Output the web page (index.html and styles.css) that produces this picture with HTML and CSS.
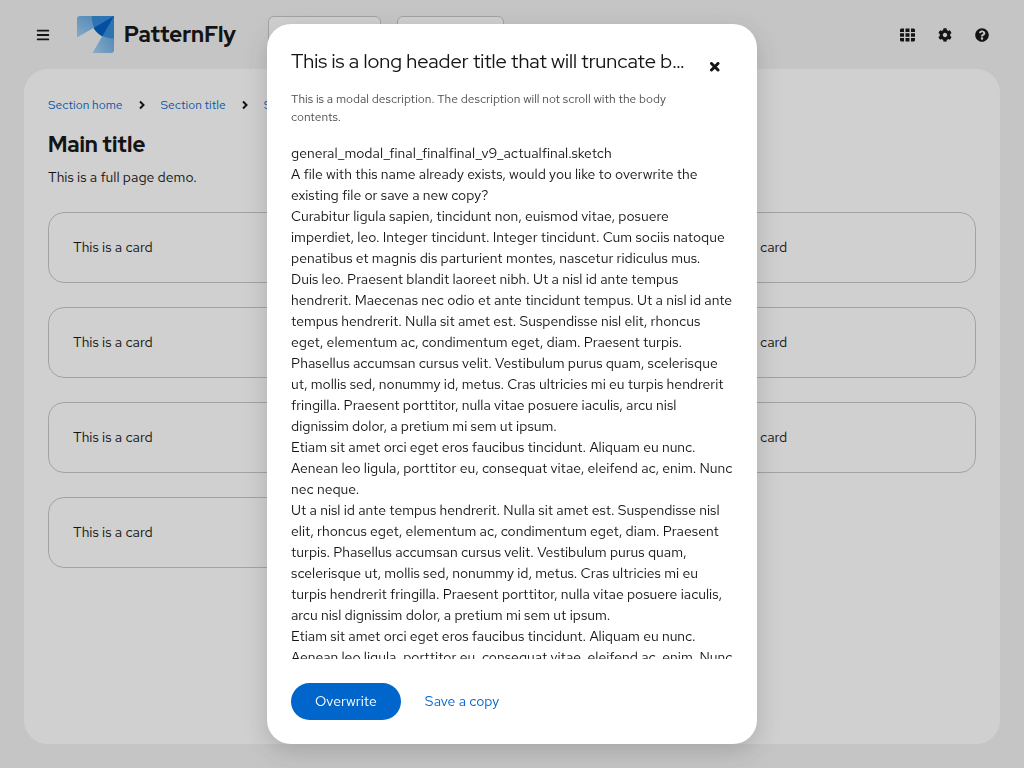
FILE: index.html
```html
<!DOCTYPE html>
<html lang="en">
<head>
<meta charset="utf-8">
<meta name="viewport" content="width=device-width, initial-scale=1">
<title>PatternFly modal</title>
<link rel="stylesheet" href="styles.css">
</head>
<body>
<div class="page">
  <header class="masthead">
    <button class="icon-button" type="button" aria-label="Global navigation">
      <svg width="14" height="14" viewBox="0 0 448 512"><path d="M16 132h416c8.800 0 16-7.200 16-16V76c0-8.800-7.200-16-16-16H16C7.200 60 0 67.200 0 76v40c0 8.800 7.200 16 16 16zm0 160h416c8.800 0 16-7.200 16-16v-40c0-8.800-7.200-16-16-16H16c-8.800 0-16 7.200-16 16v40c0 8.800 7.200 16 16 16zm0 160h416c8.800 0 16-7.200 16-16v-40c0-8.800-7.200-16-16-16H16c-8.800 0-16 7.200-16 16v40c0 8.800 7.200 16 16 16z"/></svg>
    </button>
    <a class="brand" href="#">
      <svg width="37" height="37" viewBox="0 0 37 37" aria-hidden="true">
        <defs>
          <linearGradient id="fade-left" x1="0" y1="1" x2="1" y2="0"><stop offset="0" stop-color="#a3d1f5"/><stop offset="1" stop-color="#4b97d8"/></linearGradient>
          <linearGradient id="fade-bottom" x1="0" y1="1" x2="1" y2="0"><stop offset="0" stop-color="#a8d2f5"/><stop offset="1" stop-color="#4b97d8"/></linearGradient>
        </defs>
        <path fill="url(#fade-left)" d="M3 0H37L0 21.500V3a3 3 0 0 1 3-3z"/>
        <path fill="url(#fade-bottom)" d="M37 0V34a3 3 0 0 1-3 3H15.500z"/>
        <path fill="#358ddb" d="M15 0H37V22.500C32.500 22.500 29 21.500 25.500 20L17 11.500C15.500 8 14.500 4 15 0z"/>
        <path fill="#005fc4" d="M37 0L16.500 12C18.500 15.500 21.500 18.500 25.300 20.500z"/>
      </svg>
      <span>PatternFly</span>
    </a>
    <div class="toolbar">
      <button class="menu-toggle" type="button" aria-label="Context selector"></button>
      <button class="menu-toggle" type="button" aria-label="Perspective"></button>
    </div>
    <div class="actions">
      <button class="icon-button" type="button" aria-label="Applications">
        <svg width="15" height="14" viewBox="0 0 15 14"><path d="M1 .500h3v3.500H0V1.500zM5.500.500h4V4h-4zM11 .500h3l1 1V4h-4zM0 5.200h4v3.600H0zM5.500 5.200h4v3.600h-4zM11 5.200h4v3.600h-4zM0 10h4v3.500H1l-1-1zM5.500 10h4v3.500h-4zM11 10h4v2.500l-1 1h-3z"/></svg>
      </button>
      <button class="icon-button" type="button" aria-label="Settings">
        <svg width="14" height="14" viewBox="0 0 512 512"><path d="M487.400 315.700l-42.600-24.600c4.300-23.200 4.300-47 0-70.200l42.600-24.600c4.900-2.800 7.100-8.600 5.500-14-11.100-35.600-30-67.800-54.700-94.600-3.800-4.100-10-5.100-14.800-2.300L380.800 110c-17.900-15.400-38.500-27.300-60.800-35.100V25.800c0-5.600-3.900-10.500-9.400-11.700-36.700-8.200-74.300-7.800-109.200 0-5.500 1.200-9.400 6.100-9.400 11.700V75c-22.200 7.900-42.800 19.800-60.800 35.100L88.700 85.500c-4.900-2.800-11-1.900-14.800 2.300-24.700 26.700-43.600 58.900-54.700 94.600-1.700 5.400.600 11.200 5.500 14L67.300 221c-4.300 23.200-4.300 47 0 70.200l-42.600 24.600c-4.900 2.800-7.100 8.600-5.500 14 11.100 35.600 30 67.800 54.700 94.600 3.800 4.100 10 5.100 14.800 2.300l42.600-24.600c17.900 15.400 38.500 27.300 60.800 35.100v49.200c0 5.600 3.900 10.500 9.400 11.700 36.700 8.200 74.300 7.800 109.200 0 5.500-1.200 9.400-6.100 9.400-11.700v-49.200c22.200-7.900 42.800-19.800 60.800-35.100l42.600 24.600c4.900 2.800 11 1.900 14.800-2.300 24.700-26.700 43.600-58.900 54.700-94.600 1.500-5.500-.700-11.300-5.600-14.100zM256 336c-44.100 0-80-35.900-80-80s35.900-80 80-80 80 35.900 80 80-35.900 80-80 80z"/></svg>
      </button>
      <button class="icon-button" type="button" aria-label="Help">
        <svg width="14" height="14" viewBox="0 0 512 512"><path d="M504 256c0 137-111 248-248 248S8 393 8 256C8 119.100 119 8 256 8s248 111.100 248 248zM262.700 90c-54.500 0-89.300 23-116.500 63.800-3.500 5.300-2.400 12.400 2.700 16.300l34.700 26.300c5.200 3.900 12.600 3 16.700-2.100 17.900-22.700 30.100-35.800 57.300-35.800 20.400 0 45.700 13.100 45.700 33 0 15-12.400 22.700-32.500 34C247.100 238.500 216 254.900 216 296v4c0 6.600 5.400 12 12 12h56c6.600 0 12-5.400 12-12v-1.300c0-28.500 83.200-29.600 83.200-106.700 0-58-60.200-102-116.500-102zM256 338c-25.400 0-46 20.600-46 46 0 25.400 20.600 46 46 46s46-20.600 46-46c0-25.400-20.600-46-46-46z"/></svg>
      </button>
    </div>
  </header>

  <main class="content">
    <nav aria-label="Breadcrumb">
      <ol class="breadcrumb">
        <li><a href="#">Section home</a></li>
        <li><svg class="divider" width="6" height="10" viewBox="0 0 6 10"><path d="M1 1.500L4.500 5L1 8.500"/></svg><a href="#">Section title</a></li>
        <li><svg class="divider" width="6" height="10" viewBox="0 0 6 10"><path d="M1 1.500L4.500 5L1 8.500"/></svg><a href="#">Section title</a></li>
      </ol>
    </nav>
    <h1 class="title">Main title</h1>
    <p class="lead">This is a full page demo.</p>
    <div class="gallery">
      <div class="card">This is a card</div>
      <div class="card">This is a card</div>
      <div class="card">This is a card</div>
      <div class="card">This is a card</div>
      <div class="card">This is a card</div>
      <div class="card">This is a card</div>
      <div class="card">This is a card</div>
      <div class="card">This is a card</div>
      <div class="card">This is a card</div>
      <div class="card">This is a card</div>
    </div>
  </main>
</div>

<div class="backdrop">
  <section class="modal" role="dialog" aria-modal="true" aria-labelledby="modal-title" aria-describedby="modal-description">
    <header class="modal-header">
      <div class="modal-heading">
        <h2 class="modal-title" id="modal-title">This is a long header title that will truncate because modal titles should be very short</h2>
        <p class="modal-description" id="modal-description">This is a modal description. The description will not scroll with the body contents.</p>
      </div>
      <button class="close" type="button" aria-label="Close">
        <svg width="10" height="10" viewBox="0 0 10 10"><path d="M1.500 1.500L8 8M8 1.500L1.500 8"/></svg>
      </button>
    </header>
    <div class="modal-body" tabindex="0">
      <p>general_modal_final_finalfinal_v9_actualfinal.sketch</p>
      <p>A file with this name already exists, would you like to overwrite the existing file or save a new copy?</p>
      <p>Curabitur ligula sapien, tincidunt non, euismod vitae, posuere imperdiet, leo. Integer tincidunt. Integer tincidunt. Cum sociis natoque penatibus et magnis dis parturient montes, nascetur ridiculus mus.</p>
      <p>Duis leo. Praesent blandit laoreet nibh. Ut a nisl id ante tempus hendrerit. Maecenas nec odio et ante tincidunt tempus. Ut a nisl id ante tempus hendrerit. Nulla sit amet est. Suspendisse nisl elit, rhoncus eget, elementum ac, condimentum eget, diam. Praesent turpis. Phasellus accumsan cursus velit. Vestibulum purus quam, scelerisque ut, mollis sed, nonummy id, metus. Cras ultricies mi eu turpis hendrerit fringilla. Praesent porttitor, nulla vitae posuere iaculis, arcu nisl dignissim dolor, a pretium mi sem ut ipsum.</p>
      <p>Etiam sit amet orci eget eros faucibus tincidunt. Aliquam eu nunc. Aenean leo ligula, porttitor eu, consequat vitae, eleifend ac, enim. Nunc nec neque.</p>
      <p>Ut a nisl id ante tempus hendrerit. Nulla sit amet est. Suspendisse nisl elit, rhoncus eget, elementum ac, condimentum eget, diam. Praesent turpis. Phasellus accumsan cursus velit. Vestibulum purus quam, scelerisque ut, mollis sed, nonummy id, metus. Cras ultricies mi eu turpis hendrerit fringilla. Praesent porttitor, nulla vitae posuere iaculis, arcu nisl dignissim dolor, a pretium mi sem ut ipsum.</p>
      <p>Etiam sit amet orci eget eros faucibus tincidunt. Aliquam eu nunc. Aenean leo ligula, porttitor eu, consequat vitae, eleifend ac, enim. Nunc nec neque.</p>
    </div>
    <footer class="modal-footer">
      <button class="button primary" type="button">Overwrite</button>
      <button class="button link" type="button">Save a copy</button>
    </footer>
  </section>
</div>
</body>
</html>
```
FILE: styles.css
```css
*, *::before, *::after { box-sizing: border-box; }

body {
  margin: 0;
  color: #151515;
  background: #f2f2f2;
  font: 14px/21px "Red Hat Text", Lato, "Liberation Sans", sans-serif;
}

h1, h2, p, ol { margin: 0; padding: 0; }
button { font: inherit; color: inherit; cursor: pointer; }
a { color: #06c; text-decoration: none; }
svg { display: block; fill: currentColor; }

.page {
  display: flex;
  flex-direction: column;
  height: 100vh;
  padding: 0 24px 24px;
}

.masthead {
  display: flex;
  align-items: center;
  padding: 16px 0;
}
.icon-button {
  display: grid;
  place-items: center;
  width: 37px;
  height: 37px;
  padding: 0;
  border: 0;
  background: none;
}
.brand {
  display: flex;
  align-items: center;
  gap: 10px;
  margin-left: 16px;
  color: #151515;
  font: 800 22px/37px "Red Hat Display", "Red Hat Text", Lato, sans-serif;
}
.toolbar {
  display: flex;
  gap: 16px;
  margin-left: 32px;
}
.menu-toggle {
  width: 113px;
  height: 37px;
  border: 1px solid #c7c7c7;
  border-radius: 6px;
  background: #fff;
}
.menu-toggle + .menu-toggle { width: 107px; }
.actions {
  display: flex;
  margin-left: auto;
}

.content {
  flex: 1;
  min-height: 0;
  padding: 24px;
  border-radius: 24px;
  background: #fff;
  overflow: hidden;
}
.breadcrumb {
  display: flex;
  list-style: none;
  font-size: 12px;
  line-height: 24px;
}
.breadcrumb li {
  display: flex;
  align-items: center;
}
.divider {
  margin: 0 16px;
  fill: none;
  stroke: currentColor;
  stroke-width: 2;
}
.title {
  margin-top: 12px;
  font: 800 22px/31px "Red Hat Display", "Red Hat Text", Lato, sans-serif;
}
.lead { margin: 7px 0 24px; }
.gallery {
  display: grid;
  grid-template-columns: repeat(3, 1fr);
  gap: 24px;
}
.card {
  padding: 24px;
  border: 1px solid #c7c7c7;
  border-radius: 16px;
}

.backdrop {
  position: fixed;
  inset: 0;
  display: flex;
  align-items: center;
  justify-content: center;
  padding: 24px;
  background: rgba(21, 21, 21, .2);
}
.modal {
  display: flex;
  flex-direction: column;
  width: 100%;
  max-width: 490px;
  max-height: 100%;
  padding: 24px;
  border-radius: 24px;
  background: #fff;
  box-shadow: 0 8px 24px rgba(41, 41, 41, .2);
}
.modal-header {
  display: flex;
  align-items: flex-start;
  gap: 8px;
}
.modal-heading {
  flex: 1;
  min-width: 0;
}
.modal-title {
  overflow: hidden;
  white-space: nowrap;
  text-overflow: ellipsis;
  font: 400 20px/26px "Red Hat Display", "Red Hat Text", Lato, sans-serif;
}
.modal-description {
  margin-top: 16px;
  color: #4d4d4d;
  font-size: 12px;
  line-height: 18px;
}
.close {
  display: grid;
  place-items: center;
  width: 37px;
  height: 37px;
  padding: 0;
  border: 0;
  background: none;
}
.close svg {
  stroke: currentColor;
  stroke-width: 3;
  stroke-linecap: round;
}
.modal-body {
  flex: 1;
  min-height: 0;
  margin-top: 17px;
  overflow-y: auto;
  scrollbar-width: none;
}
.modal-footer {
  display: flex;
  gap: 8px;
  padding-top: 24px;
}
.button {
  padding: 8px 24px;
  border: 0;
  border-radius: 24px;
  background: none;
}
.primary {
  color: #fff;
  background: #06c;
}
.link {
  padding: 8px 16px;
  color: #06c;
}
```
